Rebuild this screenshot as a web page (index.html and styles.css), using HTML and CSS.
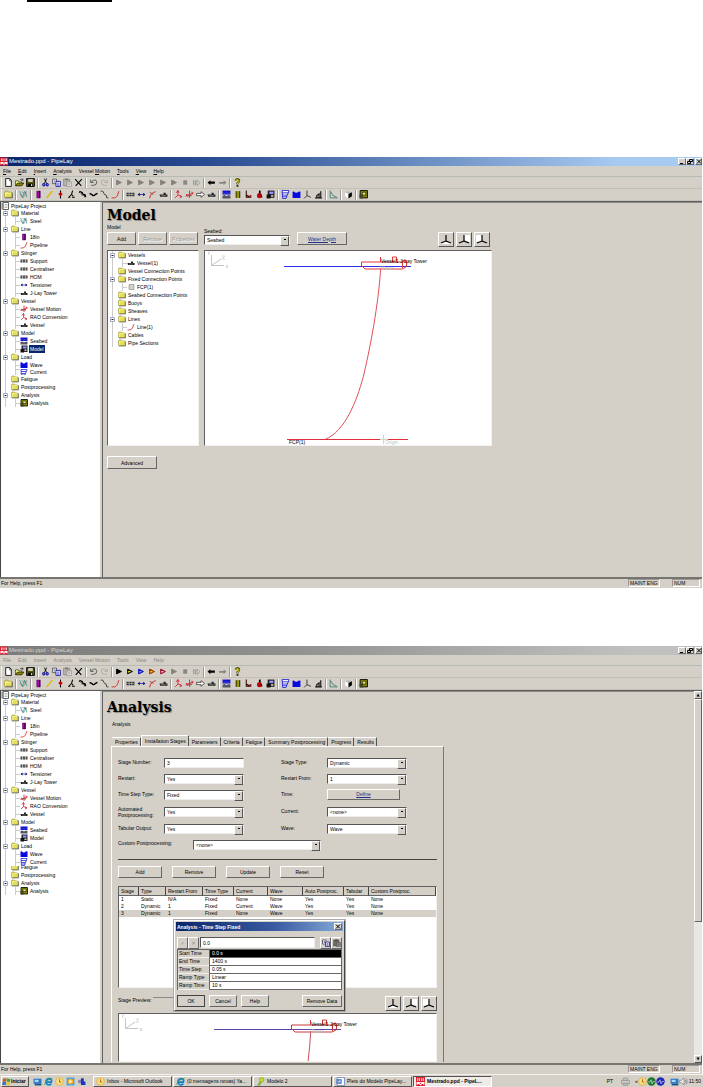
FILE: index.html
```html
<!DOCTYPE html>
<html lang="en">
<head>
<meta charset="utf-8">
<title>PipeLay</title>
<link rel="stylesheet" href="styles.css">
</head>
<body>
<svg class="defs" aria-hidden="true">
<symbol id="app" viewBox="0 0 16 16"><path fill="#e02030" d="M0 0h16v16H0z"/><path d="M1 9h14v5l-4-2-3 3-3-3-4 2z" fill="#fff"/><path d="M3 2v5M6 2v5M10 2v5M13 2v5" stroke="#fff" stroke-width="1.5"/><path d="M6 10l2 3 2-3z" fill="#e02030"/></symbol>
<symbol id="new" viewBox="0 0 16 16"><path d="M3 1h7l3 3v11H3z" fill="#fff" stroke="#000" stroke-width="1.5"/><path d="M10 1v4h3" fill="none" stroke="#000"/></symbol>
<symbol id="open" viewBox="0 0 16 16"><path d="M1 14V5h5l1 2h5v2" fill="#ff8" stroke="#000"/><path d="M1 14l3-5h12l-4 5z" fill="#880" stroke="#000"/><path d="M9 3q3-3 5 1m0-3v3h-3" fill="none" stroke="#000"/></symbol>
<symbol id="save" viewBox="0 0 16 16"><path d="M1 1h14v14H1z" fill="#550" stroke="#000" stroke-width="1.5"/><path d="M4 2h8v5H4z" fill="#d4d0c8"/><path d="M4 10h8v5H4z"/><path d="M9 11h2v3H9z" fill="#fff"/></symbol>
<symbol id="cut" viewBox="0 0 16 16"><path d="M6 1l4 9M10 1L6 10" stroke="#000" stroke-width="1.5"/><g fill="none" stroke="#1010a0" stroke-width="1.8"><circle cx="5" cy="12" r="2"/><circle cx="11" cy="12" r="2"/></g></symbol>
<symbol id="copy" viewBox="0 0 16 16"><path d="M1 2h7v8H1z" fill="#fff" stroke="#000"/><path d="M7 6h8v9H7z" fill="#fff" stroke="#1010a0" stroke-width="1.5"/><path d="M3 5h3M3 7h3M9 9h4M9 11h4M9 13h4" stroke="#1010a0"/></symbol>
<symbol id="paste" viewBox="0 0 16 16"><path d="M1 2h11v12H1z" fill="#b5b1a9" stroke="#777"/><path d="M4 1h5v3H4z" fill="#777"/><path d="M7 7h8v8H7z" fill="#eee" stroke="#777"/><path d="M9 10h4M9 12h4" stroke="#777"/></symbol>
<symbol id="del" viewBox="0 0 16 16"><path d="M2 2l11 12M14 2L3 14" stroke="#000" stroke-width="2"/></symbol>
<symbol id="undo" viewBox="0 0 16 16"><path d="M3 3v5h5M4 7q8-7 10 0q0 6-6 6H4" fill="none" stroke="#555" stroke-width="1.6"/></symbol>
<symbol id="redo" viewBox="0 0 16 16"><path d="M13 3v5H8M12 7Q4 0 2 7q0 6 6 6h4" fill="none" stroke="#aaa69e" stroke-width="1.5"/></symbol>
<symbol id="play" viewBox="0 0 16 16"><path d="M3 4l8 4-8 4z" stroke="currentColor" stroke-width="2" stroke-linejoin="round"/></symbol>
<symbol id="stop" viewBox="0 0 16 16"><path d="M4 4h7v8H4z" fill="#888"/></symbol>
<symbol id="step" viewBox="0 0 16 16"><path d="M3 4v9M6 4v9M9 4l5 4.500-5 4.500z" fill="#eee" stroke="#888" stroke-width="1.5"/></symbol>
<symbol id="back" viewBox="0 0 16 16"><path d="M1 8l5-4v2h8v4H6v3z"/></symbol>
<symbol id="fwd" viewBox="0 0 16 16"><path d="M15 8l-5-4v3H2v3h8v3z" fill="#8a8780"/></symbol>
<symbol id="help" viewBox="0 0 16 16"><path d="M5 5q0-3 3-3t3 3q0 2-3 4v2" fill="none" stroke="#220" stroke-width="3.500"/><path d="M5 5q0-2 3-2t3 2q0 2-3 4v2" fill="none" stroke="#dd0" stroke-width="1.800"/><circle cx="8" cy="14" r="1.500" fill="#880" stroke="#000"/></symbol>
<symbol id="folder" viewBox="0 0 16 16"><path d="M1 13V4l1-2h5l1 2h6v9z" fill="#e4de58" stroke="#8a8520"/><path d="M2 5h11v1H3v7H2z" fill="#ffffb0"/><path d="M2 14h13V5" fill="none" stroke="#444" stroke-width="1.200"/></symbol>
<symbol id="steel" viewBox="0 0 16 16"><path d="M1 2l5 11 4-11 4 11" fill="none" stroke="#2a9b8a" stroke-width="1.500"/><path d="M1 7l6 7 7-12M5 3l9 4" fill="none" stroke="#667" /></symbol>
<symbol id="pipe" viewBox="0 0 16 16"><path d="M5 2h6v12H5z" fill="#b000b0" stroke="#400050"/><path d="M10 2v12" stroke="#000" stroke-width="1.500"/></symbol>
<symbol id="rod" viewBox="0 0 16 16"><path d="M3 14L13 2" stroke="#c8a800" stroke-width="2.500"/><path d="M3 14L13 2" stroke="#ffe000"/></symbol>
<symbol id="joint" viewBox="0 0 16 16"><path d="M8 1v14" stroke="#000" stroke-width="2"/><path d="M4 7l4-3 4 3-4 4z" fill="#c00000"/></symbol>
<symbol id="flex" viewBox="0 0 16 16"><path d="M2 13h4M9 13h5M4 12l4-4 3 3M8 8l2-7" fill="none" stroke="#000" stroke-width="1.800"/></symbol>
<symbol id="chain" viewBox="0 0 16 16"><path d="M2 3l5 2 1 3 4 1 1 4" fill="none" stroke="#000" stroke-width="3.500"/><path d="M3 3l10 11" stroke="#ccc"/></symbol>
<symbol id="buoy" viewBox="0 0 16 16"><path d="M1 6l4 2q3 4 6 0l4-2" fill="none" stroke="#000" stroke-width="2.500"/></symbol>
<symbol id="stairs" viewBox="0 0 16 16"><path d="M1 2h4l3 6 3 1 1 5h3" fill="none" stroke="#333" stroke-width="1.500"/></symbol>
<symbol id="line" viewBox="0 0 16 16"><path d="M1 14h5q5 0 8-12" fill="none" stroke="#d02020" stroke-width="1.500"/></symbol>
<symbol id="support" viewBox="0 0 16 16"><path d="M1 5h4v6H1zM6 5h4v6H6zM11 5h4v6h-4z" fill="#333"/><path d="M2 8h12" stroke="#ccc"/></symbol>
<symbol id="tens" viewBox="0 0 16 16"><path d="M2 8h12" stroke="#2030d0" stroke-width="1.500"/><path d="M1 8l4-3v6zM15 8l-4-3v6z" fill="#101060"/></symbol>
<symbol id="arc" viewBox="0 0 16 16"><path d="M3 15q1-10 11-12" fill="none" stroke="#d02020" stroke-width="1.600"/><path d="M3 4l7 4" stroke="#600"/></symbol>
<symbol id="tower" viewBox="0 0 16 16"><path d="M1 8h7V5h4v3h3v4H2z" fill="#222"/><path d="M4 10h8" stroke="#aaa"/></symbol>
<symbol id="rao" viewBox="0 0 16 16"><path d="M7 1v8l7 3M7 9l-5 5M4 5l3-4 2 4M11 9l3 3-4 2" fill="none" stroke="#d02030" stroke-width="1.500"/></symbol>
<symbol id="motion" viewBox="0 0 16 16"><path d="M8 1v13M1 11l14-6M2 7l3 5M12 3l2 5" fill="none" stroke="#d02030" stroke-width="1.600"/><path d="M3 8h9v3H4z" fill="#a55"/></symbol>
<symbol id="out" viewBox="0 0 16 16"><path d="M1 6h8V3l6 5-6 5v-3H1z" fill="#fff" stroke="#333" stroke-width="1.400"/></symbol>
<symbol id="seabed" viewBox="0 0 16 16"><path d="M1 1h14v7H1z" fill="#1010c8"/><path d="M1 10l4-1 3 2 4-2 3 1v5H1z" fill="#556"/><path d="M2 5l3 1 3-1 3 1 3-1" stroke="#66e" fill="none"/></symbol>
<symbol id="bars" viewBox="0 0 16 16"><path d="M4 2h3v12H4zM9 2h3v12H9z" fill="#990"/><path d="M7 2v12M12 2v12" stroke="#000" stroke-width="1.500"/></symbol>
<symbol id="crane" viewBox="0 0 16 16"><path d="M4 1v12h9M4 9l7 4" fill="none" stroke="#300" stroke-width="1.800"/><path d="M10 9h3v3h-3z" fill="#a00"/></symbol>
<symbol id="float" viewBox="0 0 16 16"><circle cx="8" cy="10" r="4.500" fill="#c00010"/><path d="M7 1h3v5H7z"/><path d="M9 8l4 5" stroke="#500" stroke-width="2"/></symbol>
<symbol id="model" viewBox="0 0 16 16"><path d="M3 1h12v13H3z" fill="#223"/><path d="M6 3h7v4H6z" fill="#99f"/><path d="M1 8h7v7H1z" fill="#111"/><path d="M9 9h4v3H9z" fill="#cc8"/></symbol>
<symbol id="current" viewBox="0 0 16 16"><path d="M2 1h12l-1 4-2 4-2 6H3zM2 5h11M3 9h8M3 12h7" fill="#fff" stroke="#1818d0" stroke-width="1.500"/></symbol>
<symbol id="wave" viewBox="0 0 16 16"><path d="M1 3q3-1 4 1 3 2 5 0 2-2 5-1v11H1z" fill="#0808e0"/></symbol>
<symbol id="axis" viewBox="0 0 16 16"><path d="M7 1v9l7 3M7 10l-5 5" fill="none" stroke="#222" stroke-width="1.500"/></symbol>
<symbol id="person" viewBox="0 0 16 16"><path d="M2 14h12M5 13v-3l4-3v6M12 2v12" fill="none" stroke="#111" stroke-width="2"/></symbol>
<symbol id="graph" viewBox="0 0 16 16"><path d="M2 1v13h13M3 3q2 8 11 10" fill="none" stroke="#276b60" stroke-width="1.300"/></symbol>
<symbol id="cube" viewBox="0 0 16 16"><path d="M2 4l6 3v8l-6-4z" fill="#fff"/><path d="M2 4l5-2 7 2-6 3z" fill="#bbb"/><path d="M8 7l6-3v7l-6 4z" fill="#000"/></symbol>
<symbol id="analysis" viewBox="0 0 16 16"><path d="M2 1h13v13H2z" fill="#880" stroke="#000" stroke-width="1.600"/><path d="M6 4h6v5H6z" fill="#e8e890" stroke="#000"/><path d="M1 8h6v7H1z" fill="#442"/></symbol>
<symbol id="proj" viewBox="0 0 16 16"><path d="M4 1h11v14H4z" fill="#fff" stroke="#333" stroke-width="1.500"/><path d="M1 1h4v14H1z" fill="#888"/><path d="M7 5h6M7 8h6M7 11h6" stroke="#777"/></symbol>
<symbol id="fcp" viewBox="0 0 16 16"><path d="M4 3h10v10H4z" fill="#d4d0c8" stroke="#777"/></symbol>
<symbol id="exp" viewBox="0 0 5 5"><path d="M.5.5h4v4h-4z" fill="#fff" stroke="#a4a4c4"/><path d="M1.500 2.500h2" stroke="#222"/></symbol>
<symbol id="v1" viewBox="0 0 16 15"><path d="M2 12l6-3 6 3z" fill="#fff"/><path d="M8 3v6l5 2M8 9l-5 2" fill="none" stroke="#000" stroke-width="1.200"/></symbol>
<symbol id="v2" viewBox="0 0 16 15"><path d="M8 3h6v7L8 8z" fill="#fff"/><path d="M8 3v6l5 2M8 9l-5 2" fill="none" stroke="#000" stroke-width="1.200"/></symbol>
<symbol id="v3" viewBox="0 0 16 15"><path d="M2 3h6v6l-6 1z" fill="#fff"/><path d="M8 3v6l5 2M8 9l-5 2" fill="none" stroke="#000" stroke-width="1.200"/></symbol>
<symbol id="min" viewBox="0 0 8 7"><path d="M2 5.500h3" stroke="#000"/></symbol>
<symbol id="max" viewBox="0 0 8 7"><path d="M3.500 1.500h3v2h-3zM1.500 3.500h3v2h-3z" fill="#d4d0c8" stroke="#000"/></symbol>
<symbol id="close" viewBox="0 0 8 7"><path d="M2 1.500l4 4M6 1.500l-4 4" stroke="#000"/></symbol>
<symbol id="ie" viewBox="0 0 16 16"><path d="M13 12q-6 5-9-1-2-7 5-8 6 1 4 6H5" fill="none" stroke="#1580c8" stroke-width="3"/><path d="M1 14Q3 5 15 2" fill="none" stroke="#3a9c50" stroke-width="1.500"/></symbol>
<symbol id="outlook" viewBox="0 0 16 16"><circle cx="8" cy="8" r="7" fill="#f8dc80" stroke="#e0b050" stroke-width="1.500"/><path d="M8 4v5h3" fill="none" stroke="#a06010" stroke-width="1.500"/></symbol>
<symbol id="desk" viewBox="0 0 16 16"><path d="M1 3h14v9H1z" fill="#2878c8"/><path d="M3 12h12v3H3z" fill="#245080"/><path d="M3 5h7v4H3z" fill="#a8d8f0"/></symbol>
<symbol id="media" viewBox="0 0 16 16"><path d="M1 1h14v14H1z" fill="#48a0d8"/><circle cx="8" cy="8" r="5" fill="#ffb020"/><path d="M6 5l5 3-5 3z" fill="#fff"/></symbol>
<symbol id="net" viewBox="0 0 16 16"><path d="M2 5h8v6H2z" fill="#88a"/><path d="M7 2h5v12H7zM11 8h4v6h-4z" fill="#2030c0"/></symbol>
<symbol id="word" viewBox="0 0 16 16"><path d="M2 1h13v14H2z" fill="#fff" stroke="#3058a8"/><path d="M1 4h9v8H1z" fill="#3068c0"/><path d="M3 6l1 4 2-4 1 4 1-4" fill="none" stroke="#fff"/></symbol>
<symbol id="key" viewBox="0 0 16 16"><circle cx="10" cy="5" r="4" fill="#c8dc30" stroke="#7a9010"/><path d="M7 8l-5 7h5l3-6z" fill="#78b030"/></symbol>
<symbol id="win" viewBox="0 0 16 16"><path d="M2 3l5-1v6l-6 1z" fill="#e05020"/><path d="M8 2l7 2-1 5-6-1z" fill="#50a030"/><path d="M1 9l6-1v6H0z" fill="#3878d0"/><path d="M8 9l6 1-1 5-5-1z" fill="#e8c020"/></symbol>
<symbol id="ball" viewBox="0 0 16 16"><circle cx="8" cy="8" r="7.500" fill="currentColor"/><path d="M2 9h3l2-4 2 7 2-4h3" fill="none" stroke="#fff"/></symbol>
<symbol id="vol" viewBox="0 0 16 16"><path d="M1 6h3l5-4v12l-5-4H1z" fill="#eee" stroke="#666"/><path d="M11 5q2 3 0 6M13 3q3 5 0 10" fill="none" stroke="#666"/></symbol>
<symbol id="print" viewBox="0 0 16 16"><path d="M4 2h8v4H4zM1 6h14v6H1zM4 11h8v4H4z" fill="#ccc" stroke="#999" stroke-width="1.500"/></symbol>
<symbol id="axes" viewBox="0 0 26 20" overflow="visible"><path d="M6.500 4v10.500H19M6.500 14.500L16 8" fill="none" stroke="#c4c4c4"/><path d="M3 1h2l-2 2h2M17 5h3l-3 3h3M21 14l2 3M23 14l-2 3" stroke="#d8d8d8" fill="none"/></symbol>
</svg>

<div class="rule"></div>

<section class="window first">
<header class="titlebar"><svg class="ic"><use href="#app"/></svg><h2>Mestrado.ppd - PipeLay</h2><button aria-label="Minimize"><svg><use href="#min"/></svg></button><button aria-label="Restore"><svg><use href="#max"/></svg></button><button class="x" aria-label="Close"><svg><use href="#close"/></svg></button></header>
<nav class="menubar"><button><u>F</u>ile</button><button><u>E</u>dit</button><button><u>I</u>nsert</button><button><u>A</u>nalysis</button><button>Vessel <u>M</u>otion</button><button><u>T</u>ools</button><button><u>V</u>iew</button><button><u>H</u>elp</button></nav>
<div class="toolbar"><button aria-label="New"><svg><use href="#new"/></svg></button><button aria-label="Open"><svg><use href="#open"/></svg></button><button aria-label="Save"><svg><use href="#save"/></svg></button><i></i><button aria-label="Cut"><svg><use href="#cut"/></svg></button><button aria-label="Copy"><svg><use href="#copy"/></svg></button><button aria-label="Paste"><svg><use href="#paste"/></svg></button><button aria-label="Delete"><svg><use href="#del"/></svg></button><i></i><button aria-label="Undo"><svg><use href="#undo"/></svg></button><button aria-label="Redo"><svg><use href="#redo"/></svg></button><i></i><button class="off" aria-label="Run"><svg><use href="#play"/></svg></button><button class="off" aria-label="Run static"><svg><use href="#play"/></svg></button><button class="off" aria-label="Run dynamic"><svg><use href="#play"/></svg></button><button class="off" aria-label="Run fatigue"><svg><use href="#play"/></svg></button><button class="off" aria-label="Run post"><svg><use href="#play"/></svg></button><button class="off" aria-label="Resume"><svg><use href="#play"/></svg></button><button aria-label="Stop"><svg><use href="#stop"/></svg></button><button aria-label="Step"><svg><use href="#step"/></svg></button><i></i><button aria-label="Back"><svg><use href="#back"/></svg></button><button aria-label="Forward"><svg><use href="#fwd"/></svg></button><i></i><button aria-label="Help"><svg><use href="#help"/></svg></button></div>
<div class="toolbar"><button aria-label="Folder"><svg><use href="#folder"/></svg></button><i></i><button aria-label="Steel"><svg><use href="#steel"/></svg></button><i></i><button aria-label="Pipe"><svg><use href="#pipe"/></svg></button><button aria-label="Rod"><svg><use href="#rod"/></svg></button><button aria-label="Joint"><svg><use href="#joint"/></svg></button><button aria-label="Flex joint"><svg><use href="#flex"/></svg></button><button aria-label="Chain"><svg><use href="#chain"/></svg></button><button aria-label="Buoy"><svg><use href="#buoy"/></svg></button><button aria-label="Segments"><svg><use href="#stairs"/></svg></button><button aria-label="Line"><svg><use href="#line"/></svg></button><i></i><button aria-label="Support"><svg><use href="#support"/></svg></button><button aria-label="Tensioner"><svg><use href="#tens"/></svg></button><button aria-label="Stinger"><svg><use href="#arc"/></svg></button><button aria-label="Tower"><svg><use href="#tower"/></svg></button><i></i><button aria-label="RAO"><svg><use href="#rao"/></svg></button><button aria-label="Motion"><svg><use href="#motion"/></svg></button><button aria-label="Convert"><svg><use href="#out"/></svg></button><button aria-label="Vessel"><svg><use href="#tower"/></svg></button><i></i><button aria-label="Seabed"><svg><use href="#seabed"/></svg></button><button aria-label="Soil"><svg><use href="#bars"/></svg></button><button aria-label="Crane"><svg><use href="#crane"/></svg></button><button aria-label="Float"><svg><use href="#float"/></svg></button><button aria-label="Model"><svg><use href="#model"/></svg></button><i></i><button aria-label="Current"><svg><use href="#current"/></svg></button><button aria-label="Wave"><svg><use href="#wave"/></svg></button><button aria-label="Axis"><svg><use href="#axis"/></svg></button><button aria-label="Load"><svg><use href="#person"/></svg></button><i></i><button aria-label="Fatigue"><svg><use href="#graph"/></svg></button><i></i><button aria-label="Post"><svg><use href="#cube"/></svg></button><i></i><button aria-label="Analysis"><svg><use href="#analysis"/></svg></button></div>
<div class="work">
<ul class="tree project">
<li class="root"><svg><use href="#proj"/></svg>PipeLay Project</li>
<li><svg class="e"><use href="#exp"/></svg><svg><use href="#folder"/></svg>Material</li>
<li class="leaf"><svg><use href="#steel"/></svg>Steel</li>
<li><svg class="e"><use href="#exp"/></svg><svg><use href="#folder"/></svg>Line</li>
<li class="leaf"><svg><use href="#pipe"/></svg>18in</li>
<li class="leaf"><svg><use href="#line"/></svg>Pipeline</li>
<li><svg class="e"><use href="#exp"/></svg><svg><use href="#folder"/></svg>Stinger</li>
<li class="leaf"><svg><use href="#support"/></svg>Support</li>
<li class="leaf"><svg><use href="#support"/></svg>Centraliser</li>
<li class="leaf"><svg><use href="#support"/></svg>HOM</li>
<li class="leaf"><svg><use href="#tens"/></svg>Tensioner</li>
<li class="leaf"><svg><use href="#tower"/></svg>J-Lay Tower</li>
<li><svg class="e"><use href="#exp"/></svg><svg><use href="#folder"/></svg>Vessel</li>
<li class="leaf"><svg><use href="#motion"/></svg>Vessel Motion</li>
<li class="leaf"><svg><use href="#rao"/></svg>RAO Conversion</li>
<li class="leaf"><svg><use href="#tower"/></svg>Vessel</li>
<li><svg class="e"><use href="#exp"/></svg><svg><use href="#folder"/></svg>Model</li>
<li class="leaf"><svg><use href="#seabed"/></svg>Seabed</li>
<li class="leaf"><svg><use href="#model"/></svg><span class="sel">Model</span></li>
<li><svg class="e"><use href="#exp"/></svg><svg><use href="#folder"/></svg>Load</li>
<li class="leaf"><svg><use href="#wave"/></svg>Wave</li>
<li class="leaf cutlow"><svg><use href="#current"/></svg>Current</li>
<li class="flat"><svg><use href="#folder"/></svg>Fatigue</li>
<li class="flat"><svg><use href="#folder"/></svg>Postprocessing</li>
<li><svg class="e"><use href="#exp"/></svg><svg><use href="#folder"/></svg>Analysis</li>
<li class="leaf"><svg><use href="#analysis"/></svg>Analysis</li>
</ul>
<main class="content model">
<h1>Model</h1>
<div class="modelgrid">
<div class="side">
<p>Model</p>
<div class="trio"><button class="btn">Add</button><button class="btn" disabled>Remove</button><button class="btn" disabled>Properties</button></div>
<ul class="tree well">
<li><svg class="e"><use href="#exp"/></svg><svg><use href="#folder"/></svg>Vessels</li>
<li class="leaf"><svg><use href="#tower"/></svg>Vessel(1)</li>
<li class="flat"><svg><use href="#folder"/></svg>Vessel Connection Points</li>
<li><svg class="e"><use href="#exp"/></svg><svg><use href="#folder"/></svg>Fixed Connection Points</li>
<li class="leaf"><svg><use href="#fcp"/></svg>FCP(1)</li>
<li class="flat"><svg><use href="#folder"/></svg>Seabed Connection Points</li>
<li class="flat"><svg><use href="#folder"/></svg>Buoys</li>
<li class="flat"><svg><use href="#folder"/></svg>Sheaves</li>
<li><svg class="e"><use href="#exp"/></svg><svg><use href="#folder"/></svg>Lines</li>
<li class="leaf"><svg><use href="#line"/></svg>Line(1)</li>
<li class="flat"><svg><use href="#folder"/></svg>Cables</li>
<li class="flat last"><svg><use href="#folder"/></svg>Pipe Sections</li>
</ul>
</div>
<div class="view">
<div class="viewbar">
<div class="pick"><label for="seabed-pick">Seabed:</label><span class="combo"><select id="seabed-pick"><option>Seabed</option></select></span></div>
<button class="btn link">Water Depth</button>
<div class="views"><button aria-label="Plan view"><svg><use href="#v1"/></svg></button><button aria-label="Side view"><svg><use href="#v2"/></svg></button><button aria-label="Front view"><svg><use href="#v3"/></svg></button></div>
</div>
<div class="well stage"><svg viewBox="0 0 286 194">
<use href="#axes" width="26" height="20"/>
<g id="scene"><path d="M79 15.500h127" stroke="#3030f0"/><path d="M156.500 15v-4H202l-1 5-4 2h-37l-3-3M187.500 11V6h4v5M197.500 17V9.500h4V15M175.500 11V6" fill="none" stroke="#e03838"/><path d="M175.700 17C174 45 168 85 158.300 125.700C151 152 140 180 120 188.500" fill="none" stroke="#e05058"/><path d="M82 188.500h121" stroke="#e03040"/><path d="M178.500 184v9M175 188.500h8" stroke="#c4dcc8"/><text x="176" y="12">Vessel1</text><text x="195" y="12">J-Lay Tower</text><text x="175" y="19" class="faint">Water</text><text x="84" y="193">FCP(1)</text><text x="180" y="193" class="faint">Origin</text></g>
</svg></div>
</div>
</div>
<button class="btn adv">Advanced</button>
</main>
</div>
<footer class="status"><span>For Help, press F1</span><span class="pane wide">MAINT ENG</span><span class="pane">NUM</span></footer>
</section>

<section class="window second">
<header class="titlebar"><svg class="ic"><use href="#app"/></svg><h2>Mestrado.ppd - PipeLay</h2><button aria-label="Minimize"><svg><use href="#min"/></svg></button><button aria-label="Restore"><svg><use href="#max"/></svg></button><button class="x" aria-label="Close"><svg><use href="#close"/></svg></button></header>
<nav class="menubar"><button disabled>File</button><button disabled>Edit</button><button disabled>Insert</button><button disabled>Analysis</button><button disabled>Vessel Motion</button><button disabled>Tools</button><button disabled>View</button><button disabled>Help</button></nav>
<div class="toolbar"><button aria-label="New"><svg><use href="#new"/></svg></button><button aria-label="Open"><svg><use href="#open"/></svg></button><button aria-label="Save"><svg><use href="#save"/></svg></button><i></i><button aria-label="Cut"><svg><use href="#cut"/></svg></button><button aria-label="Copy"><svg><use href="#copy"/></svg></button><button aria-label="Paste"><svg><use href="#paste"/></svg></button><button aria-label="Delete"><svg><use href="#del"/></svg></button><i></i><button aria-label="Undo"><svg><use href="#undo"/></svg></button><button aria-label="Redo"><svg><use href="#redo"/></svg></button><i></i><button class="run k" aria-label="Run"><svg><use href="#play"/></svg></button><button class="run y" aria-label="Run static"><svg><use href="#play"/></svg></button><button class="run b" aria-label="Run dynamic"><svg><use href="#play"/></svg></button><button class="run o" aria-label="Run fatigue"><svg><use href="#play"/></svg></button><button class="run r" aria-label="Run post"><svg><use href="#play"/></svg></button><button class="off" aria-label="Resume"><svg><use href="#play"/></svg></button><button aria-label="Stop"><svg><use href="#stop"/></svg></button><button aria-label="Step"><svg><use href="#step"/></svg></button><i></i><button aria-label="Back"><svg><use href="#back"/></svg></button><button aria-label="Forward"><svg><use href="#fwd"/></svg></button><i></i><button aria-label="Help"><svg><use href="#help"/></svg></button></div>
<div class="toolbar"><button aria-label="Folder"><svg><use href="#folder"/></svg></button><i></i><button aria-label="Steel"><svg><use href="#steel"/></svg></button><i></i><button aria-label="Pipe"><svg><use href="#pipe"/></svg></button><button aria-label="Rod"><svg><use href="#rod"/></svg></button><button aria-label="Joint"><svg><use href="#joint"/></svg></button><button aria-label="Flex joint"><svg><use href="#flex"/></svg></button><button aria-label="Chain"><svg><use href="#chain"/></svg></button><button aria-label="Buoy"><svg><use href="#buoy"/></svg></button><button aria-label="Segments"><svg><use href="#stairs"/></svg></button><button aria-label="Line"><svg><use href="#line"/></svg></button><i></i><button aria-label="Support"><svg><use href="#support"/></svg></button><button aria-label="Tensioner"><svg><use href="#tens"/></svg></button><button aria-label="Stinger"><svg><use href="#arc"/></svg></button><button aria-label="Tower"><svg><use href="#tower"/></svg></button><i></i><button aria-label="RAO"><svg><use href="#rao"/></svg></button><button aria-label="Motion"><svg><use href="#motion"/></svg></button><button aria-label="Convert"><svg><use href="#out"/></svg></button><button aria-label="Vessel"><svg><use href="#tower"/></svg></button><i></i><button aria-label="Seabed"><svg><use href="#seabed"/></svg></button><button aria-label="Soil"><svg><use href="#bars"/></svg></button><button aria-label="Crane"><svg><use href="#crane"/></svg></button><button aria-label="Float"><svg><use href="#float"/></svg></button><button aria-label="Model"><svg><use href="#model"/></svg></button><i></i><button aria-label="Current"><svg><use href="#current"/></svg></button><button aria-label="Wave"><svg><use href="#wave"/></svg></button><button aria-label="Axis"><svg><use href="#axis"/></svg></button><button aria-label="Load"><svg><use href="#person"/></svg></button><i></i><button aria-label="Fatigue"><svg><use href="#graph"/></svg></button><i></i><button aria-label="Post"><svg><use href="#cube"/></svg></button><i></i><button aria-label="Analysis"><svg><use href="#analysis"/></svg></button></div>
<div class="work">
<ul class="tree project">
<li class="root"><svg><use href="#proj"/></svg>PipeLay Project</li>
<li><svg class="e"><use href="#exp"/></svg><svg><use href="#folder"/></svg>Material</li>
<li class="leaf"><svg><use href="#steel"/></svg>Steel</li>
<li><svg class="e"><use href="#exp"/></svg><svg><use href="#folder"/></svg>Line</li>
<li class="leaf"><svg><use href="#pipe"/></svg>18in</li>
<li class="leaf"><svg><use href="#line"/></svg>Pipeline</li>
<li><svg class="e"><use href="#exp"/></svg><svg><use href="#folder"/></svg>Stinger</li>
<li class="leaf"><svg><use href="#support"/></svg>Support</li>
<li class="leaf"><svg><use href="#support"/></svg>Centraliser</li>
<li class="leaf"><svg><use href="#support"/></svg>HOM</li>
<li class="leaf"><svg><use href="#tens"/></svg>Tensioner</li>
<li class="leaf"><svg><use href="#tower"/></svg>J-Lay Tower</li>
<li><svg class="e"><use href="#exp"/></svg><svg><use href="#folder"/></svg>Vessel</li>
<li class="leaf"><svg><use href="#motion"/></svg>Vessel Motion</li>
<li class="leaf"><svg><use href="#rao"/></svg>RAO Conversion</li>
<li class="leaf"><svg><use href="#tower"/></svg>Vessel</li>
<li><svg class="e"><use href="#exp"/></svg><svg><use href="#folder"/></svg>Model</li>
<li class="leaf"><svg><use href="#seabed"/></svg>Seabed</li>
<li class="leaf"><svg><use href="#model"/></svg>Model</li>
<li><svg class="e"><use href="#exp"/></svg><svg><use href="#folder"/></svg>Load</li>
<li class="leaf"><svg><use href="#wave"/></svg>Wave</li>
<li class="leaf"><svg><use href="#current"/></svg>Current</li>
<li class="flat cuttop"><svg><use href="#folder"/></svg>Fatigue</li>
<li class="flat"><svg><use href="#folder"/></svg>Postprocessing</li>
<li><svg class="e"><use href="#exp"/></svg><svg><use href="#folder"/></svg>Analysis</li>
<li class="leaf"><svg><use href="#analysis"/></svg>Analysis</li>
</ul>
<main class="content analysis">
<h1>Analysis</h1>
<p class="crumb">Analysis</p>
<div class="tabs" role="tablist"><button role="tab">Properties</button><button role="tab" aria-selected="true" class="on">Installation Stages</button><button role="tab">Parameters</button><button role="tab">Criteria</button><button role="tab">Fatigue</button><button role="tab">Summary Postprocessing</button><button role="tab">Progress</button><button role="tab">Results</button></div>
<div class="panel">
<form class="form">
<label for="f1">Stage Number:</label><input id="f1" class="text" value="3">
<label for="f2" class="c2">Stage Type:</label><span class="combo"><select id="f2"><option>Dynamic</option></select></span>
<label for="f3">Restart:</label><span class="combo"><select id="f3"><option>Yes</option></select></span>
<label for="f4" class="c2">Restart From:</label><span class="combo"><select id="f4"><option>1</option></select></span>
<label for="f5">Time Step Type:</label><span class="combo"><select id="f5"><option>Fixed</option></select></span>
<label for="f6" class="c2">Time:</label><button type="button" id="f6" class="btn link define">Define</button>
<label for="f7">Automated Postprocessing:</label><span class="combo"><select id="f7"><option>Yes</option></select></span>
<label for="f8" class="c2">Current:</label><span class="combo"><select id="f8"><option>&lt;none&gt;</option></select></span>
<label for="f9">Tabular Output:</label><span class="combo"><select id="f9"><option>Yes</option></select></span>
<label for="f10" class="c2">Wave:</label><span class="combo"><select id="f10"><option>Wave</option></select></span>
</form>
<div class="custom"><label for="f11">Custom Postprocessing:</label><span class="combo"><select id="f11"><option>&lt;none&gt;</option></select></span></div>
<hr>
<div class="acts"><button class="btn">Add</button><button class="btn">Remove</button><button class="btn">Update</button><button class="btn">Reset</button></div>
<div class="well list">
<table><colgroup><col class="w20"><col class="w27"><col class="w37"><col class="w31"><col class="w34"><col class="w35"><col class="w41"><col class="w25"><col></colgroup>
<thead><tr><th>Stage</th><th>Type</th><th>Restart From</th><th>Time Type</th><th>Current</th><th>Wave</th><th>Auto Postproc.</th><th>Tabular</th><th>Custom Postproc.</th></tr></thead>
<tbody><tr><td>1</td><td>Static</td><td>N/A</td><td>Fixed</td><td>None</td><td>None</td><td>Yes</td><td>Yes</td><td>None</td></tr>
<tr><td>2</td><td>Dynamic</td><td>1</td><td>Fixed</td><td>Current</td><td>Wave</td><td>Yes</td><td>Yes</td><td>None</td></tr>
<tr class="cur"><td>3</td><td>Dynamic</td><td>1</td><td>Fixed</td><td>None</td><td>Wave</td><td>Yes</td><td>Yes</td><td>None</td></tr></tbody></table>
<div class="dialog" role="dialog" aria-label="Analysis - Time Step Fixed">
<header><h3>Analysis - Time Step Fixed</h3><button class="x" aria-label="Close dialog"><svg><use href="#close"/></svg></button></header>
<div class="edit"><button class="sq" disabled aria-label="Accept">✓</button><button class="sq" disabled aria-label="Reject">✕</button><input class="text" value="0.0" aria-label="Value"><button class="sq push" aria-label="Copy"><svg><use href="#copy"/></svg></button><button class="sq dark" aria-label="Paste"><svg><use href="#paste"/></svg></button></div>
<table class="props"><tbody><tr class="hot"><th>Start Time</th><td>0.0 s</td></tr><tr><th>End Time</th><td>1400 s</td></tr><tr><th>Time Step</th><td>0.05 s</td></tr><tr><th>Ramp Type</th><td>Linear</td></tr><tr><th>Ramp Time</th><td>10 s</td></tr></tbody></table>
<div class="dbtns"><button class="btn ok">OK</button><button class="btn">Cancel</button><button class="btn">Help</button><button class="btn push">Remove Data</button></div>
</div>
</div>
<div class="prev"><span>Stage Preview:</span><b></b><div class="views"><button aria-label="Plan view"><svg><use href="#v1"/></svg></button><button aria-label="Side view"><svg><use href="#v2"/></svg></button><button aria-label="Front view"><svg><use href="#v3"/></svg></button></div></div>
<div class="well stage short"><svg viewBox="0 0 317 47" preserveAspectRatio="xMinYMin">
<use href="#axes" width="26" height="20"/>
<g><path d="M95 15.500h127" stroke="#5848a8"/><path d="M172.500 15v-4H218l-1 5-4 2h-37l-3-3M203.500 11V6h4v5M213.500 17V9.500h4V15M191.500 11V6" fill="none" stroke="#c83838"/><path d="M191.700 17Q191 32 189 48" fill="none" stroke="#c85058"/><text x="192" y="12">Vessel1</text><text x="211" y="12">J-Lay Tower</text><text x="191" y="19" class="faint">Water</text></g>
</svg></div>
</div>
</main>
<div class="scroll"><button aria-label="Scroll up">▲</button><div class="thumb"></div><div class="track"></div><button aria-label="Scroll down">▼</button></div>
</div>
<footer class="status"><span>For Help, press F1</span><span class="pane wide">MAINT ENG</span><span class="pane">NUM</span></footer>
</section>

<footer class="taskbar">
<button class="start"><svg><use href="#win"/></svg>Iniciar</button>
<div class="quick"><button aria-label="Desktop"><svg><use href="#desk"/></svg></button><button aria-label="Browser"><svg><use href="#ie"/></svg></button><button aria-label="Mail"><svg><use href="#outlook"/></svg></button><button aria-label="Media"><svg><use href="#media"/></svg></button><button aria-label="Network"><svg><use href="#net"/></svg></button></div>
<div class="tasks"><button><svg><use href="#outlook"/></svg>Inbox - Microsoft Outlook</button><button><svg><use href="#ie"/></svg>(0 mensagens novas) Ya...</button><button><svg><use href="#key"/></svg>Modelo 2</button><button><svg><use href="#word"/></svg>Plets do Modelo PipeLay...</button><button class="on"><svg><use href="#app"/></svg>Mestrado.ppd - PipeL...</button></div>
<div class="tray"><span class="lang">PT</span><svg class="pr"><use href="#print"/></svg><span>«</span><svg><use href="#outlook"/></svg><svg class="green"><use href="#ball"/></svg><svg class="blue"><use href="#ball"/></svg><svg class="gapl"><use href="#desk"/></svg><svg><use href="#vol"/></svg><time>11:50</time></div>
</footer>
</body>
</html>
```
FILE: styles.css
```css
* { box-sizing: border-box; }
:root { --face: #d4d0c8; --hi: #ffffff; --lo: #808080; --dk: #505050; }
body { margin: 0; background: #fff; color: #000; font: 5px/8px "Liberation Sans", Arial, sans-serif; }
h1, h2, h3, p, ul { margin: 0; padding: 0; font-weight: normal; }
ul { list-style: none; }
button, input, select { font: inherit; color: inherit; margin: 0; padding: 0; border: 0; border-radius: 0; background: none; appearance: none; outline: 0; min-width: 0; }
svg { display: block; flex: none; }
.defs { position: absolute; width: 0; height: 0; }

.rule { width: 85px; height: 2px; margin-left: 27px; background: #000; }
.window { margin-right: 1px; background: var(--face); }
.window.first { margin-top: 155px; }
.window.second { margin-top: 58px; }

.titlebar { display: flex; align-items: center; height: 9px; background: linear-gradient(90deg, #0a246a, #2a4c92 30%, #a6caf0 88%); color: #fff; }
.second .titlebar { background: linear-gradient(90deg, #7c7c7c, #909090 40%, #c0c0c0 90%); color: #d8d5ce; }
.titlebar .ic { width: 8px; height: 9px; margin-right: 1px; }
.titlebar h2 { flex: 1; font-size: 6px; line-height: 9px; }
.titlebar button, .dialog header button { width: 8px; height: 7px; background: var(--face); border: 1px solid; border-color: #fff #666 #666 #fff; }
.titlebar button svg, .dialog header button svg { width: 8px; height: 7px; margin: -1px; }
.titlebar .x { margin-left: 1px; width: 7px; }

.menubar { display: flex; gap: 7px; height: 11px; padding: 0 3px; border-bottom: 1px solid #b6bcb4; line-height: 9px; }
.menubar button:disabled { color: #8a8780; }
.toolbar { display: flex; align-items: center; height: 12px; padding-left: 3px; border-bottom: 1px solid #c4c0b8; background: linear-gradient(90deg, transparent 1px, #f4f2ee 1px 2px, transparent 2px); }
.toolbar button { width: 11px; height: 11px; display: grid; place-items: center; }
.toolbar svg { width: 9px; height: 9px; }
.toolbar i { width: 4px; height: 10px; background: linear-gradient(90deg, transparent 1px, #999 1px 2px, #fff 2px 3px, transparent 3px); }
.toolbar .off { color: #85827b; fill: #85827b; }
.run.k { color: #000; fill: #000; }
.run.y { color: #111; fill: #ee0; }
.run.b { color: #1010c0; fill: #5ad; }
.run.o { color: #a03000; fill: #fd0; }
.run.r { color: #a01030; fill: #fbb; }

.work { display: flex; border-top: 1px solid #606060; }
.first .work { min-height: 376px; }
.second .work { min-height: 373px; }
.project { width: 100px; background: #fff; border-left: 1px solid #444; }
.content { flex: 1; min-width: 0; margin-left: 2px; border-left: 1px solid #606060; border-top: 1px solid #8c8a84; padding: 0 4px; }

.tree li { display: flex; align-items: center; height: 8px; padding-left: 2px; white-space: nowrap; background: linear-gradient(90deg, transparent 4px, #ccc 4px 5px, transparent 5px); }
.tree svg { width: 8px; height: 8px; margin-right: 2px; }
.tree svg.e { width: 5px; height: 5px; margin-right: 3px; }
.tree .root { height: 7px; padding-left: 0; background: none; }
.tree .flat { padding-left: 10px; }
.tree .leaf { padding-left: 19px; background: linear-gradient(90deg, transparent 4px, #ccc 4px 5px, transparent 5px 14px, #ccc 14px 15px, transparent 15px); }
.tree .leaf::before { content: ""; width: 4px; height: 1px; margin-left: -4px; background: #ccc; }
.tree .cutlow { height: 6px; overflow: hidden; align-items: flex-start; line-height: 7px; }
.tree .cuttop { height: 5px; overflow: hidden; align-items: flex-end; }
.sel { background: #0a246a; color: #fff; padding: 0 1px; margin-left: -1px; }

.content h1 { font: bold 14px/16px "DejaVu Serif", serif; text-shadow: 1px 1px 1px #8a8780; }
.model h1 { padding-top: 4px; }
.btn { height: 13px; background: var(--face); border: 1px solid; border-color: #fff #666 #666 #fff; text-align: center; line-height: 10px; }
.btn:disabled { color: #9a968e; text-shadow: 1px 1px #fff; }
.btn.link { color: #203090; text-decoration: underline; }
.well { background: #fff; border: 1px solid; border-color: #606060 #f4f2ee #f4f2ee #606060; }
.modelgrid { display: flex; gap: 5px; }
.side { width: 92px; }
.side p { height: 9px; line-height: 8px; }
.trio { display: flex; gap: 2px; margin-bottom: 5px; }
.trio .btn { flex: none; width: 29px; }
.side .tree { height: 196px; }
.view { width: 288px; }
.viewbar { display: flex; align-items: flex-start; height: 27px; padding-top: 5px; }
.pick { width: 86px; margin-right: 7px; }
.pick label { display: block; height: 7px; line-height: 7px; }
.viewbar .btn { width: 50px; margin-top: 4px; }
.views { display: flex; gap: 2px; margin-left: auto; }
.viewbar .views { margin: 4px 2px 0 auto; }
.views button { width: 16px; height: 15px; border: 1px solid; border-color: #fff #555 #555 #fff; }
.views svg { width: 16px; height: 15px; margin: -1px; }
.stage { height: 196px; overflow: hidden; }
.stage svg { width: 100%; height: 194px; }
.stage.short { height: 49px; }
.stage.short svg { height: 47px; }
.stage text { font-size: 5px; }
.faint { fill: #bcc4bc; }
.adv { width: 50px; margin-top: 10px; }

.combo { position: relative; display: block; height: 10px; }
.combo select { display: block; width: 100%; height: 10px; padding: 0 9px 0 2px; background: #fff; border: 1px solid; border-color: #555 #eee #eee #555; line-height: 8px; }
.combo::after { content: ""; position: absolute; right: 1px; top: 1px; width: 7px; height: 8px; border: 1px solid; border-color: #fff #555 #555 #fff; background: conic-gradient(from -45deg at 50% 80%, #000 90deg, transparent 0) center 2px / 4px 2px no-repeat var(--face); pointer-events: none; }
.text { height: 10px; padding: 0 2px; background: #fff; border: 1px solid; border-color: #555 #eee #eee #555; line-height: 8px; }

.analysis { padding-top: 7px; }
.crumb { padding: 5px 0 0 5px; height: 20px; }
.tabs { display: flex; align-items: flex-end; margin-left: 5px; height: 11px; }
.tabs button { height: 9px; padding: 0 2px 0 3px; border-right: 1px solid #555; border-top: 1px solid #fff; line-height: 7px; white-space: nowrap; }
.tabs .on { height: 11px; border-left: 1px solid #fff; background: var(--face); line-height: 8px; }
.panel { width: 333px; margin-left: 4px; padding: 11px 6px 0; border: 1px solid; border-bottom: 0; border-color: #fff #777 #777 #fff; }
.form { display: grid; grid-template-columns: 46px 80px 37px 46px 80px; row-gap: 6px; align-items: center; }
.form label { line-height: 6px; padding-bottom: 2px; }
.form label[for="f7"] { padding-bottom: 0; }
.form .c2 { grid-column: 4; }
.define { height: 11px; width: 73px; line-height: 9px; margin: -1px 0 0; }
.custom { display: flex; margin-top: 6px; }
.custom label { width: 75px; line-height: 6px; }
.custom .combo { width: 128px; }
.panel hr { height: 1px; margin: 9px 0 6px; border: 0; background: #444; }
.acts { display: flex; gap: 10px; margin-bottom: 8px; }
.acts .btn { width: 44px; height: 12px; }
.list { position: relative; height: 102px; }
table { width: 100%; border-collapse: separate; border-spacing: 0; table-layout: fixed; }
th, td { padding: 0 0 0 2px; font-weight: normal; text-align: left; white-space: nowrap; line-height: 7px; height: 7px; }
.list thead th { height: 9px; line-height: 8px; background: var(--face); border-right: 1px solid #444; border-bottom: 1px solid #666; }
.list .cur { background: var(--face); }
.w20 { width: 20px; } .w27 { width: 27px; } .w37 { width: 37px; } .w31 { width: 31px; } .w34 { width: 34px; } .w35 { width: 35px; } .w41 { width: 41px; } .w25 { width: 25px; }

.dialog { position: absolute; left: 55px; top: 33px; width: 171px; background: var(--face); border: 1px solid; border-color: #fff #444 #444 #fff; box-shadow: 0 0 0 1px #aaa; padding: 1px 1px 3px; }
.dialog header { display: flex; align-items: center; height: 9px; padding-right: 1px; background: linear-gradient(90deg, #0a246a, #3a5ca2 60%, #86aad8); color: #fff; }
.dialog h3 { flex: 1; font-size: 5px; font-weight: bold; padding-left: 1px; }
.edit { display: flex; margin: 6px 1px 0; height: 12px; }
.edit .sq { width: 11px; height: 12px; border: 1px solid; border-color: #fff #666 #666 #fff; display: grid; place-items: center; color: #8a8780; font-family: "DejaVu Sans", sans-serif; }
.edit .sq svg { width: 8px; height: 8px; }
.edit .text { width: 115px; height: 11px; margin-left: 1px; }
.edit .push { margin-left: auto; }
.dark svg { filter: brightness(60%); }
.props { width: 165px; margin: 0 1px; border-top: 1px solid #666; border-left: 1px solid #666; }
.props th { width: 31px; padding-left: 1px; height: 8px; border-bottom: 1px solid #eee; }
.props td { height: 8px; background: #fff; border: 1px solid #666; border-width: 0 1px 1px; }
.props .hot td { background: #000; color: #fff; }
.dbtns { display: flex; gap: 4px; margin: 5px 1px 0; }
.dbtns .btn { width: 28px; height: 12px; }
.dbtns .ok { border-color: #444; }
.dbtns .push { width: 40px; margin-left: auto; }
.prev { display: flex; align-items: flex-start; margin-top: 8px; height: 17px; }
.prev b { width: 60px; height: 1px; margin: 1px 0 0 1px; background: #888; }

.scroll { width: 8px; display: flex; flex-direction: column; background: #e9e7e3; }
.scroll button { height: 8px; background: var(--face); border: 1px solid; border-color: #fff #555 #555 #fff; font: 4px/6px "DejaVu Sans", sans-serif; }
.thumb { flex: 5; background: var(--face); border: 1px solid; border-color: #fff #666 #666 #fff; }
.track { flex: 3; }

.status { display: flex; height: 11px; border-top: 2px solid #77756f; padding: 0 2px 0 1px; line-height: 9px; }
.status > span:first-child { flex: 1; }
.pane { width: 28px; padding-left: 1px; height: 8px; border: 1px solid; border-color: #999 #fff #fff #999; line-height: 7px; }
.pane.wide { width: 32px; margin-right: 12px; }

.taskbar { display: flex; align-items: center; height: 13px; background: var(--face); border-top: 1px solid #f4f2ee; white-space: nowrap; }
.taskbar button { display: flex; align-items: center; }
.taskbar svg { width: 9px; height: 9px; }
.start { width: 28px; height: 11px; margin-left: 1px; font-weight: bold; border: 1px solid; border-color: #fff #555 #555 #fff; }
.quick { display: flex; gap: 2px; margin-left: 4px; }
.tasks { display: flex; gap: 1px; margin-left: 7px; }
.tasks button { width: 79px; height: 11px; padding-left: 2px; gap: 2px; border: 1px solid; border-color: #fff #555 #555 #fff; }
.tasks .on { font-weight: bold; background: #eeece8; border-color: #555 #fff #fff #555; }
.tray { display: flex; align-items: center; margin-left: auto; padding-right: 2px; }
.tray .lang { margin-right: 8px; }
.tray .pr { margin-right: 5px; }
.tray .green { color: #207830; } .tray .blue { color: #2028b8; }
.tray .gapl { margin-left: 5px; }
.tray time { margin-left: 1px; }
```
